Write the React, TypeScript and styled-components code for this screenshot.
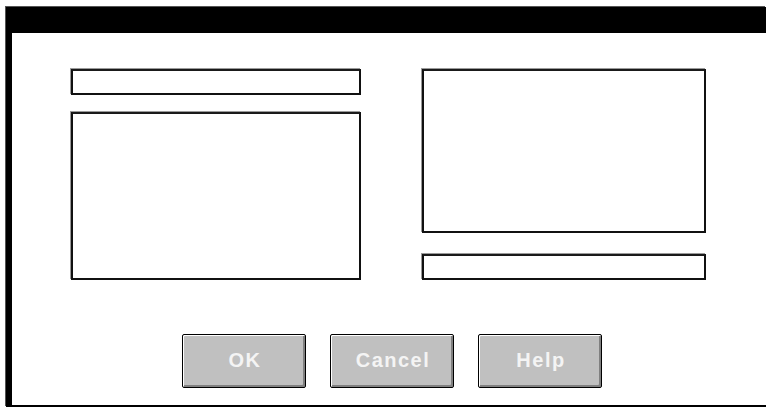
import React from "react";
import styled, { createGlobalStyle } from "styled-components";

const Global = createGlobalStyle`
  html, body { margin: 0; padding: 0; background: #ffffff; }
  body { font-family: "Liberation Sans", Arial, sans-serif; overflow: hidden; }
`;

const Page = styled.div`
  width: 766px;
  height: 407px;
  padding: 7px 0 0 6px;
  box-sizing: border-box;
  background: #ffffff;
`;

const Window = styled.div`
  width: 760px;
  height: 400px;
  display: flex;
  flex-direction: column;
  background: #000;
  box-shadow: -1px -1px 0 #555;
`;

const TitleBar = styled.div`
  height: 26px;
  flex: none;
  background: #000;
`;

const Client = styled.div`
  flex: 1;
  margin-left: 6px;
  margin-bottom: 2px;
  background: #ffffff;
  padding: 36px 0 0 59px;
  display: flex;
  flex-direction: column;
`;

const Columns = styled.div`
  display: flex;
  gap: 61px;
`;

const Column = styled.div<{ $w: number; $gap: number }>`
  width: ${(p) => p.$w}px;
  display: flex;
  flex-direction: column;
  gap: ${(p) => p.$gap}px;
`;

const Field = styled.div<{ $h: number }>`
  height: ${(p) => p.$h}px;
  box-sizing: border-box;
  border: 2px solid #111;
  border-top-color: #1a1a1a;
  background: #fff;
  box-shadow: -1px -1px 0 #9a9a9a;
`;

const ButtonRow = styled.div`
  display: flex;
  gap: 24px;
  margin-top: 54px;
  padding-left: 111px;
`;

const Button = styled.button`
  width: 124px;
  height: 54px;
  box-sizing: border-box;
  border: 1px solid #000;
  border-radius: 2px;
  background: #c0c0c0;
  box-shadow: inset 1px 1px 0 #ffffff, inset -2px -2px 0 #808080;
  color: #f4f4f4;
  font-family: "Liberation Sans", Arial, sans-serif;
  font-weight: bold;
  font-size: 20px;
  letter-spacing: 1.5px;
  padding: 0 0 1px 2px;
  display: flex;
  align-items: center;
  justify-content: center;
  cursor: default;
`;

export default function App() {
  return (
    <>
      <Global />
      <Page>
        <Window>
          <TitleBar />
          <Client>
            <Columns>
              <Column $w={290} $gap={17}>
                <Field $h={26} />
                <Field $h={168} />
              </Column>
              <Column $w={284} $gap={21}>
                <Field $h={164} />
                <Field $h={26} />
              </Column>
            </Columns>
            <ButtonRow>
              <Button>OK</Button>
              <Button>Cancel</Button>
              <Button>Help</Button>
            </ButtonRow>
          </Client>
        </Window>
      </Page>
    </>
  );
}
